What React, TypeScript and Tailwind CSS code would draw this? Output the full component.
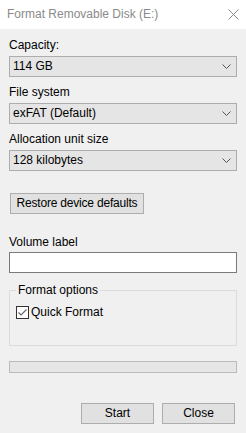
const font = "font-['Segoe_UI','Liberation_Sans',Arial,sans-serif]";

function Chevron() {
	return (
		<svg width="9" height="5" viewBox="0 0 9 5" className="shrink-0">
			<path d="M0.5 0.5 L4.5 4.5 L8.5 0.5" fill="none" stroke="#555" strokeWidth="1" />
		</svg>
	);
}

function Combo({ value }: { value: string }) {
	return (
		<div className="flex h-[21px] items-center justify-between border border-[#adadad] bg-[#e5e5e5] pr-[5px] pl-[3px]">
			<span className="leading-[15px]">{value}</span>
			<Chevron />
		</div>
	);
}

function Label({ text, className = "" }: { text: string; className?: string }) {
	return <div className={`h-[15px] leading-[17px] ${className}`}>{text}</div>;
}

function Button({ text, className = "" }: { text: string; className?: string }) {
	return (
		<div
			className={`flex h-[21px] items-center justify-center border border-[#adadad] bg-[#e1e1e1] leading-[15px] ${className}`}
		>
			{text}
		</div>
	);
}

export default function App() {
	return (
		<div className={`flex h-[433px] w-[246px] flex-col bg-[#f0f0f0] text-[12px] text-black ${font}`}>
			<div className="flex h-[29px] shrink-0 items-center justify-between bg-white pr-[7px] pl-[7px]">
				<span className="leading-[15px] text-[#8a8a8a]">Format Removable Disk (E:)</span>
				<svg width="11" height="11" viewBox="0 0 11 11">
					<path d="M0.5 0.5 L10.5 10.5 M10.5 0.5 L0.5 10.5" stroke="#8a8a8a" strokeWidth="1" />
				</svg>
			</div>

			<div className="flex flex-col px-[9px] pt-[8px]">
				<Label text="Capacity:" />
				<div className="mt-[4px]">
					<Combo value="114 GB" />
				</div>

				<Label text="File system" className="mt-[7px]" />
				<div className="mt-[4px]">
					<Combo value="exFAT (Default)" />
				</div>

				<Label text="Allocation unit size" className="mt-[7px]" />
				<div className="mt-[4px]">
					<Combo value="128 kilobytes" />
				</div>

				<Button
					text="Restore device defaults"
					className="mt-[22px] ml-[1px] w-[134px] tracking-[-0.2px]"
				/>

				<Label text="Volume label" className="mt-[20px]" />
				<div className="mt-[3px] h-[21px] border border-[#7a7a7a] bg-white" />

				<fieldset className="mt-[9px] h-[64px] border border-[#dcdcdc]">
					<legend className="ml-[6px] px-[2px] leading-[17px]">Format options</legend>
					<label className="mt-[6px] ml-[6px] flex items-center gap-[2px] leading-[15px]">
						<span className="flex h-[13px] w-[13px] items-center justify-center border border-[#333] bg-white">
							<svg width="11" height="11" viewBox="0 0 11 11">
								<path d="M1.5 5.5 L4 8 L9.5 2.5" fill="none" stroke="#666" strokeWidth="1.2" />
							</svg>
						</span>
						<span>Quick Format</span>
					</label>
				</fieldset>

				<div className="mt-[15px] h-[12px] border border-[#bcbcbc] bg-[#e6e6e6]" />

				<div className="mt-[30px] mr-[2px] flex justify-end gap-[8px]">
					<Button text="Start" className="w-[73px]" />
					<Button text="Close" className="w-[73px]" />
				</div>
			</div>
		</div>
	);
}
